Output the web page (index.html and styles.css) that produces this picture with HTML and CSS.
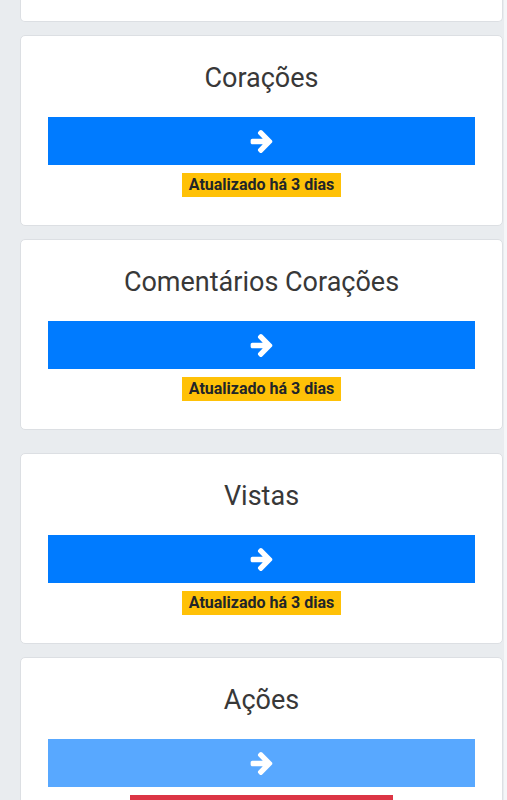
FILE: index.html
```html
<!DOCTYPE html>
<html lang="pt">

<head>
  <meta charset="UTF-8">
  <meta name="viewport" content="width=device-width, initial-scale=1.0">
  <title>Estatísticas</title>
  <link rel="stylesheet" href="styles.css">
</head>

<body>
  <main class="page">
    <div class="card card-tail"></div>

    <section class="card">
      <h2 class="card-title">Corações</h2>
      <a class="btn-go" href="#">
        <svg class="arrow" viewBox="128 181 1472 1558"><path d="M1600 960q0 54-37 91l-651 651q-39 37-91 37-51 0-90-37l-75-75q-38-38-38-91t38-91l293-293h-704q-52 0-84.5-37.5t-32.5-90.5v-128q0-53 32.5-90.5t84.5-37.5h704l-293-294q-38-36-38-90t38-90l75-75q38-38 90-38 53 0 91 38l651 651q37 35 37 90z"/></svg>
      </a>
      <span class="badge">Atualizado há 3 dias</span>
    </section>

    <section class="card">
      <h2 class="card-title">Comentários Corações</h2>
      <a class="btn-go" href="#">
        <svg class="arrow" viewBox="128 181 1472 1558"><path d="M1600 960q0 54-37 91l-651 651q-39 37-91 37-51 0-90-37l-75-75q-38-38-38-91t38-91l293-293h-704q-52 0-84.5-37.5t-32.5-90.5v-128q0-53 32.5-90.5t84.5-37.5h704l-293-294q-38-36-38-90t38-90l75-75q38-38 90-38 53 0 91 38l651 651q37 35 37 90z"/></svg>
      </a>
      <span class="badge">Atualizado há 3 dias</span>
    </section>

    <section class="card card-spaced">
      <h2 class="card-title">Vistas</h2>
      <a class="btn-go" href="#">
        <svg class="arrow" viewBox="128 181 1472 1558"><path d="M1600 960q0 54-37 91l-651 651q-39 37-91 37-51 0-90-37l-75-75q-38-38-38-91t38-91l293-293h-704q-52 0-84.5-37.5t-32.5-90.5v-128q0-53 32.5-90.5t84.5-37.5h704l-293-294q-38-36-38-90t38-90l75-75q38-38 90-38 53 0 91 38l651 651q37 35 37 90z"/></svg>
      </a>
      <span class="badge">Atualizado há 3 dias</span>
    </section>

    <section class="card">
      <h2 class="card-title">Ações</h2>
      <a class="btn-go disabled" href="#">
        <svg class="arrow" viewBox="128 181 1472 1558"><path d="M1600 960q0 54-37 91l-651 651q-39 37-91 37-51 0-90-37l-75-75q-38-38-38-91t38-91l293-293h-704q-52 0-84.5-37.5t-32.5-90.5v-128q0-53 32.5-90.5t84.5-37.5h704l-293-294q-38-36-38-90t38-90l75-75q38-38 90-38 53 0 91 38l651 651q37 35 37 90z"/></svg>
      </a>
      <span class="badge badge-danger"></span>
    </section>
  </main>
</body>

</html>
```

FILE: styles.css
```css
* {
  box-sizing: border-box;
}

html,
body {
  margin: 0;
  background: #f5f6f8;
  font-family: Roboto, "Liberation Sans", sans-serif;
}

.page {
  background: #e9ecef;
  width: 504px;
  min-height: 800px;
  padding: 0 1px 40px 20px;
}

.card {
  background: #fff;
  border: 1px solid #dcdfe3;
  border-radius: 5px;
  margin-top: 13px;
  padding: 27px 27px 28px;
  display: flex;
  flex-direction: column;
  align-items: center;
}

.card-tail {
  margin-top: 0;
  height: 22px;
  padding: 0;
  border-top: none;
  border-radius: 0 0 5px 5px;
}

.card-spaced {
  margin-top: 23px;
}

.card-title {
  margin: 0 0 23px;
  font-size: 27px;
  font-weight: 400;
  line-height: 31px;
  color: #383838;
}

.btn-go {
  display: flex;
  align-items: center;
  justify-content: center;
  align-self: stretch;
  height: 48px;
  background: #007bff;
}

.btn-go.disabled {
  opacity: 0.65;
}

.arrow {
  width: 23px;
  height: 23px;
  fill: #fff;
}

.badge {
  margin-top: 8px;
  height: 24px;
  padding: 0 7px;
  background: #ffc107;
  color: #212529;
  font-size: 16px;
  font-weight: 700;
  line-height: 24px;
  white-space: nowrap;
}

.badge-danger {
  background: #dc3545;
  width: 263px;
}
```
